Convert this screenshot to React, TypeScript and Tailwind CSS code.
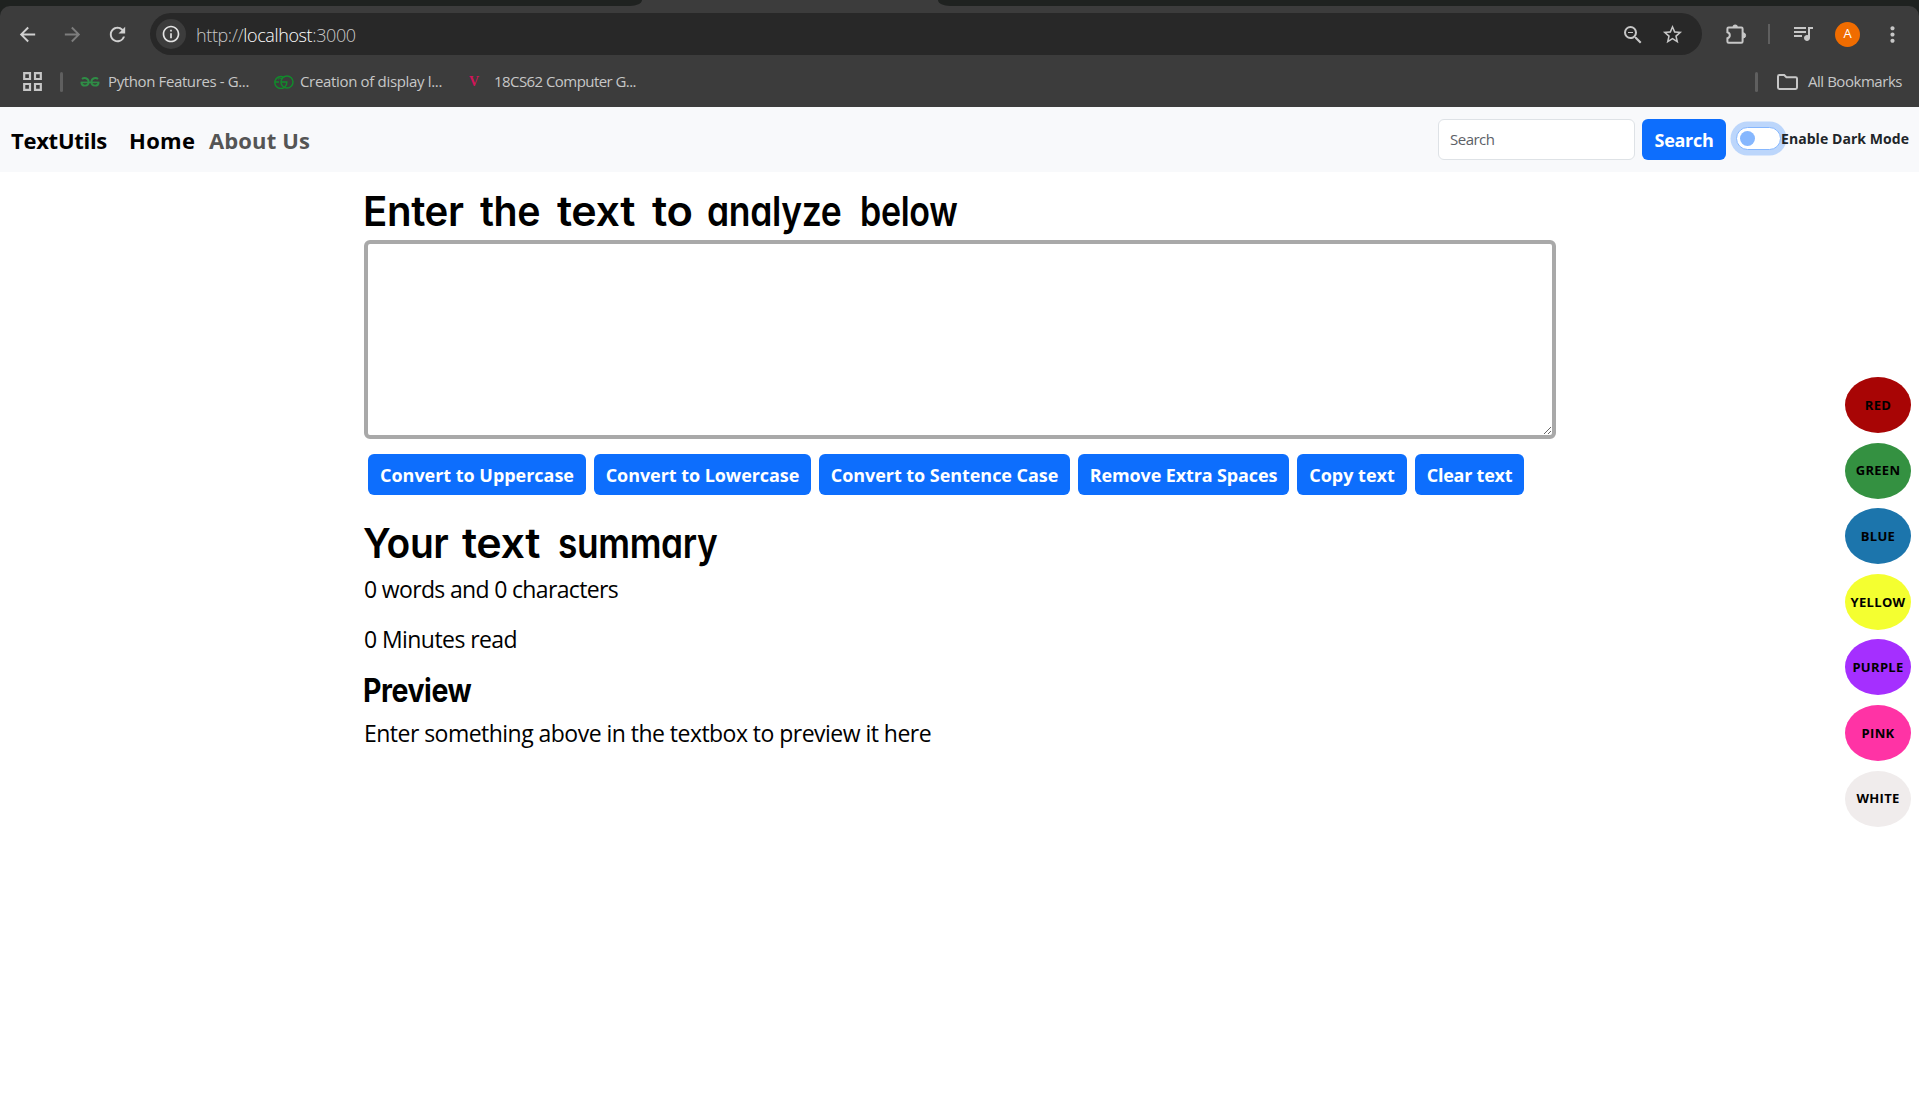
import React from "react";
import {
  MdArrowBack,
  MdArrowForward,
  MdRefresh,
  MdInfoOutline,
  MdZoomOut,
  MdStarBorder,
  MdQueueMusic,
  MdMoreVert,
} from "react-icons/md";

function Tabs() {
  return (
    <div className="flex h-1.5 justify-between">
      <div className="h-1.5 w-[642px] rounded-br-[12px_6px] bg-[#1f2220]" />
      <div className="h-1.5 w-[981px] rounded-bl-[12px_6px] bg-[#1f2220]" />
    </div>
  );
}

function PuzzleIcon() {
  return (
    <svg width="22" height="22" viewBox="0 0 22 22" fill="none" stroke="#c7c7c7" strokeWidth="2">
      <path d="M3.6 4.6H16.4Q17.6 4.6 17.6 5.8V18.6Q17.6 19.8 16.4 19.8H3.6Q2.4 19.8 2.4 18.6V15.2C5.6 14.4 5.6 10 2.4 9.2V5.8Q2.4 4.6 3.6 4.6Z" />
      <path d="M7.6 4a2.6 2.6 0 0 1 5.2 0z" fill="#c7c7c7" stroke="none" />
      <path d="M18 9.8a2.6 2.6 0 0 1 0 5.2z" fill="#c7c7c7" stroke="#c7c7c7" strokeWidth="1" />
    </svg>
  );
}

function AddressBar() {
  return (
    <div className="flex h-[50px] items-center pt-[7px] pb-px">
      <MdArrowBack className="ml-[16px] size-[23px] text-[#d0d0d0]" />
      <MdArrowForward className="ml-[22px] size-[23px] text-[#7d7d7d]" />
      <MdRefresh className="ml-[22px] size-[23px] text-[#d0d0d0]" />
      <div className="ml-[21px] flex h-[42px] w-[1552px] items-center rounded-full bg-[#282828]">
        <span className="ml-[6px] flex size-[30px] items-center justify-center rounded-full bg-[#3c3c3c]">
          <MdInfoOutline className="size-[20px] text-[#e3e3e3]" />
        </span>
        <span className="mt-0.5 ml-[10px] text-[18px] font-light tracking-[-0.38px] text-[#c7c7c7]">
          http://<span className="text-white">localhost</span>:3000
        </span>
        <MdZoomOut className="mt-[2px] ml-auto size-[24px] text-[#c7c7c7]" />
        <MdStarBorder className="mt-px mr-[18px] ml-[16px] size-[23px] text-[#c7c7c7]" />
      </div>
      <span className="ml-[23px] -mt-px">
        <PuzzleIcon />
      </span>
      <span className="ml-[21px] h-5 w-[2px] bg-[#5f5f5f]" />
      <MdQueueMusic className="-mt-[3px] ml-[21px] size-[24px] text-[#c7c7c7]" />
      <span className="ml-[20px] flex size-[25px] items-center justify-center rounded-full bg-[#f06c00] text-[13px] text-white">
        A
      </span>
      <MdMoreVert className="ml-[20px] size-[25px] text-[#c7c7c7]" />
    </div>
  );
}

function GfgIcon() {
  return (
    <svg width="20" height="12" viewBox="0 0 20 12" fill="none" stroke="#2f8d46" strokeWidth="1.9">
      <path d="M2 3C4 1.2 8.6 1.8 8.6 6C8.6 10.6 1.8 10.8 1.4 6.6" />
      <path d="M18 3C16 1.2 11.4 1.8 11.4 6C11.4 10.6 18.2 10.8 18.6 6.6" />
      <path d="M.6 6.4H19.4" strokeWidth="1.6" />
    </svg>
  );
}

function RingsIcon() {
  return (
    <svg width="20" height="14" viewBox="0 0 20 14" fill="none" stroke="#128a2c" strokeWidth="1.5">
      <path d="M9.6 2.2A6 6 0 1 0 12.8 7H7.4M.8 7H5" />
      <circle cx="13" cy="7" r="6" />
      <path d="M4 4.4Q5 2.4 8 3.4" strokeWidth="1" />
    </svg>
  );
}

function Bookmarks() {
  return (
    <div className="flex h-[51px] items-center text-[15px] text-[#c7c7c7]">
      <svg className="ml-[23px]" width="19" height="19" viewBox="0 0 19 19" fill="none" stroke="#c7c7c7" strokeWidth="2.2">
        <path d="M1.2 1.2h5.8v5.8h-5.8zM12 1.2h5.8v5.8h-5.8zM1.2 12h5.8v5.8h-5.8zM12 12h5.8v5.8h-5.8z" />
      </svg>
      <span className="ml-[18px] h-5 w-[3px] rounded-full bg-[#5f5f5f]" />
      <span className="ml-[17px]">
        <GfgIcon />
      </span>
      <span className="ml-[8px] w-[166px] tracking-[-0.38px]">Python Features - G...</span>
      <RingsIcon />
      <span className="ml-[6px] w-[169px] tracking-[-0.33px]">Creation of display l...</span>
      <span className="w-[25px] font-['Liberation_Serif'] text-[14px] font-bold text-[#d3145a]">V</span>
      <span className="tracking-[-0.56px]">18CS62 Computer G...</span>
      <span className="ml-auto h-5 w-[3px] rounded-full bg-[#5f5f5f]" />
      <svg className="ml-[19px]" width="21" height="16" viewBox="0 0 21 16" fill="none" stroke="#c7c7c7" strokeWidth="2">
        <path d="M1 2.4Q1 1 2.4 1H7.2L9.4 3.2H18.6Q20 3.2 20 4.6V13.6Q20 15 18.6 15H2.4Q1 15 1 13.6Z" />
      </svg>
      <span className="mr-[17px] ml-[10px] tracking-[-0.46px]">All Bookmarks</span>
    </div>
  );
}

function Navbar() {
  return (
    <nav className="flex h-[65px] items-center bg-[#f8f9fb] text-[22px] font-bold text-black">
      <span className="ml-[11px] w-[118px] pt-0.5 tracking-[-0.28px]">TextUtils</span>
      <span className="w-[80px] pt-0.5 tracking-[0.3px]">Home</span>
      <span className="pt-0.5 tracking-[0.12px] text-[#555]">About Us</span>
      <input
        className="ml-auto h-[41px] w-[197px] rounded-md border border-[#dee2e6] bg-white px-[11px] pb-0.5 text-[15px] font-normal tracking-[-0.5px] placeholder:text-[#5c6167]"
        placeholder="Search"
      />
      <button className="ml-[7px] h-[41px] w-[84px] rounded-md bg-[#0d6efd] pt-px text-[18px] tracking-[-0.28px] text-white">
        Search
      </button>
      <label className="mr-[10px] ml-[10px] flex items-center text-[14px] tracking-[0.06px] text-[#212529]">
        <span className="-mt-0.5 flex h-[23px] w-[45px] items-center rounded-full border border-[#86b7fe] bg-white pl-[3px] shadow-[0_0_0_5.5px_#bcd6fb]">
          <span className="size-[15px] rounded-full bg-[#86b7fe]" />
        </span>
        <span className="relative -mt-[2px]">Enable Dark Mode</span>
      </label>
    </nav>
  );
}

type Word = { text: string; cls: string };

const titleWords: Word[] = [
  { text: "Enter ", cls: "w-[117px] scale-x-[0.98]" },
  { text: "the ", cls: "w-[77px] scale-x-[0.96]" },
  { text: "text ", cls: "w-[95px] scale-x-[1.05]" },
  { text: "to ", cls: "w-[55px] scale-x-[1.06]" },
  { text: "analyze ", cls: "w-[153px] scale-x-[0.865]" },
  { text: "below", cls: "w-[100px] scale-x-[0.83]" },
];

const summaryWords: Word[] = [
  { text: "Your ", cls: "w-[99px] scale-x-[0.95]" },
  { text: "text ", cls: "w-[96px] scale-x-[1.05]" },
  { text: "summary", cls: "w-[160px] scale-x-[0.86]" },
];

function Words({ words }: { words: Word[] }) {
  return (
    <>
      {words.map((w) => (
        <span key={w.text} className={"inline-block origin-left whitespace-pre " + w.cls}>
          {w.text}
        </span>
      ))}
    </>
  );
}

const actions = [
  { label: "Convert to Uppercase", cls: "w-[218px] tracking-[-0.03px]" },
  { label: "Convert to Lowercase", cls: "w-[217px] tracking-[-0.06px]" },
  { label: "Convert to Sentence Case", cls: "w-[251px] tracking-[-0.05px]" },
  { label: "Remove Extra Spaces", cls: "w-[211px] tracking-[-0.13px]" },
  { label: "Copy text", cls: "w-[110px]" },
  { label: "Clear text", cls: "w-[109px] tracking-[-0.25px]" },
];

const swatches = [
  { label: "RED", cls: "bg-[#a80505]" },
  { label: "GREEN", cls: "bg-[#349141]" },
  { label: "BLUE", cls: "bg-[#1c75ac]" },
  { label: "YELLOW", cls: "bg-[#f4ff30]" },
  { label: "PURPLE", cls: "bg-[#a52fff]" },
  { label: "PINK", cls: "bg-[#ff33a5]" },
  { label: "WHITE", cls: "bg-[#f0ecec]" },
];

export default function App() {
  return (
    <div className="flex h-[1095px] flex-col overflow-hidden bg-white font-['Open_Sans',sans-serif] whitespace-nowrap text-black">
      <header className="bg-[#3c3c3c]">
        <Tabs />
        <div className="bg-[#1f2220]">
          <div className="rounded-t-[10px] bg-[#3c3c3c]">
            <AddressBar />
            <Bookmarks />
          </div>
        </div>
      </header>
      <Navbar />
      <div className="flex justify-between">
        <main className="ml-[364px] w-[1192px] text-[23px]">
          <h1 className="mt-[14px] -ml-px h-[54px] font-['Inter',sans-serif] text-[41px] leading-[51px] font-semibold tracking-[-0.4px] [font-feature-settings:'cv11']">
            <Words words={titleWords} />
          </h1>
          <textarea className="block h-[199px] w-full resize rounded-md border-4 border-[#a9a9a9] bg-white" />
          <div className="mt-[15px] ml-1 flex gap-2">
            {actions.map((a) => (
              <button key={a.label} className={"h-[41px] rounded-md bg-[#0d6efd] pt-0.5 text-[18px] font-bold text-white " + a.cls}>
                {a.label}
              </button>
            ))}
          </div>
          <h2 className="mt-[23px] -ml-px h-[54px] font-['Inter',sans-serif] text-[41px] leading-[50px] font-semibold tracking-[-0.4px] [font-feature-settings:'cv11']">
            <Words words={summaryWords} />
          </h2>
          <p className="h-[50px] leading-[34px] tracking-[-0.66px]">0 words and 0 characters</p>
          <p className="h-[50px] leading-[34px] tracking-[-0.57px]">0 Minutes read</p>
          <h3 className="-ml-px h-[44px] w-[130px] origin-left scale-x-[0.89] font-['Inter',sans-serif] text-[32px] leading-[38px] font-bold tracking-[-0.5px]">
            Preview
          </h3>
          <p className="leading-[34px] tracking-[-0.53px]">Enter something above in the textbox to preview it here</p>
        </main>
        <aside className="mt-[205px] mr-[8px] flex flex-col gap-[9.6px]">
          {swatches.map((s) => (
            <button
              key={s.label}
              className={"h-[56px] w-[66px] rounded-[50%] pt-px text-[13px] font-bold tracking-[0.3px] text-black " + s.cls}
            >
              {s.label}
            </button>
          ))}
        </aside>
      </div>
    </div>
  );
}
